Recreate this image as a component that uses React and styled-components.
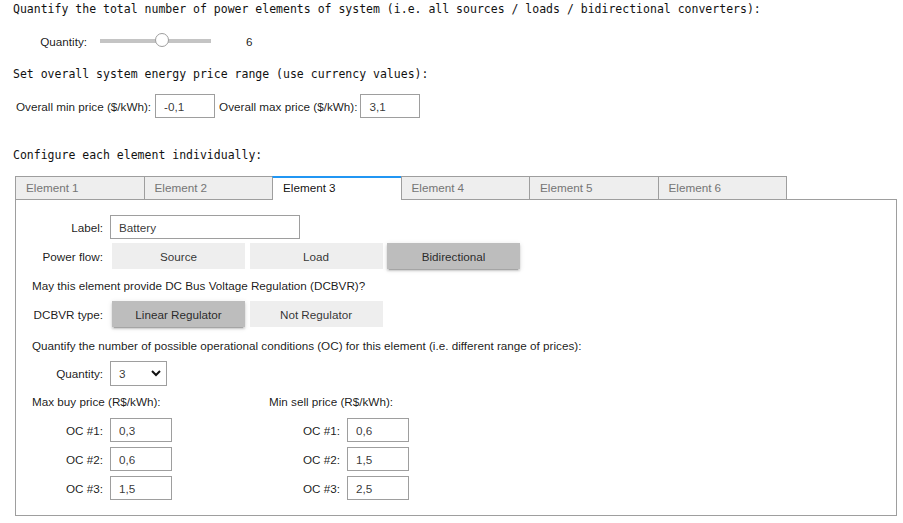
import React from 'react';
import styled, { createGlobalStyle } from 'styled-components';

const GlobalStyle = createGlobalStyle`
    body {
        margin: 0;
        background: #fff;
    }
`;

const Page = styled.div`
    padding: 0 0 0 13px;
    font-family: "Liberation Sans", Arial, sans-serif;
    font-size: 11.7px;
    color: rgba(0, 0, 0, 0.9);
`;

const MonoLine = styled.div`
    font-family: "DejaVu Sans Mono", monospace;
    font-size: 11.5px;
    line-height: 18px;
    height: 18px;
    color: #111;
    white-space: pre;
    margin-top: ${p => p.$top || 0}px;
`;

const Row = styled.div`
    display: flex;
    align-items: center;
    height: 26px;
    margin-top: ${p => p.$top || 0}px;
    margin-left: ${p => p.$left || 0}px;
`;

const Desc = styled.div`
    flex: 0 0 auto;
    width: ${p => (p.$w ? `${p.$w}px` : 'auto')};
    text-align: right;
    padding-right: ${p => p.$pr || 0}px;
    box-sizing: border-box;
    white-space: nowrap;
`;

const Track = styled.div`
    position: relative;
    width: 111px;
    height: 4px;
    margin-left: 13px;
    background: #c4c4c4;
`;

const Knob = styled.div`
    position: absolute;
    left: 55px;
    top: -6px;
    width: 14px;
    height: 14px;
    border-radius: 50%;
    border: 1px solid #9e9e9e;
    background: #fff;
    box-sizing: border-box;
`;

const Readout = styled.div`
    margin-left: 35px;
`;

const TextBox = styled.div`
    flex: 0 0 auto;
    width: ${p => p.$w}px;
    height: 24px;
    border: 1px solid #9e9e9e;
    box-sizing: border-box;
    padding: 0 8px;
    display: flex;
    align-items: center;
    color: rgba(0, 0, 0, 0.8);
    margin-right: ${p => p.$mr || 0}px;
`;

const Select = styled(TextBox)`
    justify-content: space-between;
    height: 25px;
    padding-right: 4px;
`;

const TabBar = styled.div`
    display: flex;
    align-items: flex-start;
    width: 772px;
    height: 23px;
    margin: 12px 0 0 2px;
`;

const Tab = styled.div`
    position: relative;
    z-index: 1;
    flex: 1 1 0;
    height: ${p => (p.$active ? 24 : 23)}px;
    box-sizing: border-box;
    border: 1px solid #9e9e9e;
    border-top: ${p => (p.$active ? '2px solid #2196f3' : '1px solid #9e9e9e')};
    border-bottom: none;
    margin-left: -1px;
    &:first-child { margin-left: 0; }
    background: ${p => (p.$active ? '#fff' : '#eeeeee')};
    color: ${p => (p.$active ? 'rgba(0,0,0,0.95)' : '#757575')};
    padding: ${p => (p.$active ? '2px' : '3px')} 0 0 10px;
    line-height: 15px;
`;

const Panel = styled.div`
    width: 882px;
    margin-left: 2px;
    box-sizing: border-box;
    border: 1px solid #9e9e9e;
    padding: 14px 16px 14px 16px;
    display: flex;
    flex-direction: column;
    gap: 3px;
`;

const ToggleGroup = styled.div`
    display: flex;
    gap: 4.5px;
    margin-left: 2px;
`;

const Toggle = styled.div`
    width: 133px;
    height: 26px;
    display: flex;
    align-items: center;
    justify-content: center;
    background: ${p => (p.$active ? '#bdbdbd' : '#eeeeee')};
    color: rgba(0, 0, 0, 0.8);
    box-shadow: ${p =>
        p.$active
            ? '0 2px 2px 0 rgba(0,0,0,.14), 0 3px 1px -2px rgba(0,0,0,.2), 0 1px 5px 0 rgba(0,0,0,.12)'
            : 'none'};
`;

const Columns = styled.div`
    display: flex;
    margin-top: -1px;
`;

const Column = styled.div`
    width: ${p => p.$w}px;
    display: flex;
    flex-direction: column;
    gap: 3px;
`;

const Chevron = () => (
    <svg width="12" height="12" viewBox="0 0 12 12">
        <path d="M2 4 L6 8 L10 4" fill="none" stroke="#111" strokeWidth="2" />
    </svg>
);

const ToggleButtons = ({ options, active }) => (
    <ToggleGroup>
        {options.map(o => (
            <Toggle key={o} $active={o === active}>{o}</Toggle>
        ))}
    </ToggleGroup>
);

const OcColumn = ({ title, values, w }) => (
    <Column $w={w}>
        <Row>{title}</Row>
        {values.map((v, i) => (
            <Row key={i}>
                <Desc $w={78} $pr={7}>OC #{i + 1}:</Desc>
                <TextBox $w={62}>{v}</TextBox>
            </Row>
        ))}
    </Column>
);

const tabs = ['Element 1', 'Element 2', 'Element 3', 'Element 4', 'Element 5', 'Element 6'];

const App = () => {
    return (
        <>
            <GlobalStyle />
            <Page>
                <MonoLine>Quantify the total number of power elements of system (i.e. all sources / loads / bidirectional converters):</MonoLine>
                <Row $top={10} $left={2}>
                    <Desc $w={72}>Quantity:</Desc>
                    <Track><Knob /></Track>
                    <Readout>6</Readout>
                </Row>
                <MonoLine $top={11}>Set overall system energy price range (use currency values):</MonoLine>
                <Row $top={10} $left={3}>
                    <Desc $pr={4}>Overall min price ($/kWh):</Desc>
                    <TextBox $w={60} $mr={4}>-0,1</TextBox>
                    <Desc $pr={3}>Overall max price ($/kWh):</Desc>
                    <TextBox $w={60}>3,1</TextBox>
                </Row>
                <MonoLine $top={27}>Configure each element individually:</MonoLine>
                <TabBar>
                    {tabs.map(t => (
                        <Tab key={t} $active={t === 'Element 3'}>{t}</Tab>
                    ))}
                </TabBar>
                <Panel>
                    <Row>
                        <Desc $w={78} $pr={7}>Label:</Desc>
                        <TextBox $w={190}>Battery</TextBox>
                    </Row>
                    <Row>
                        <Desc $w={78} $pr={7}>Power flow:</Desc>
                        <ToggleButtons options={['Source', 'Load', 'Bidirectional']} active="Bidirectional" />
                    </Row>
                    <Row>May this element provide DC Bus Voltage Regulation (DCBVR)?</Row>
                    <Row>
                        <Desc $w={78} $pr={7}>DCBVR type:</Desc>
                        <ToggleButtons options={['Linear Regulator', 'Not Regulator']} active="Linear Regulator" />
                    </Row>
                    <Row $top={2}>Quantify the number of possible operational conditions (OC) for this element (i.e. different range of prices):</Row>
                    <Row $top={-1}>
                        <Desc $w={78} $pr={7}>Quantity:</Desc>
                        <Select $w={57}>3<Chevron /></Select>
                    </Row>
                    <Columns>
                        <OcColumn w={237} title="Max buy price (R$/kWh):" values={['0,3', '0,6', '1,5']} />
                        <OcColumn w={300} title="Min sell price (R$/kWh):" values={['0,6', '1,5', '2,5']} />
                    </Columns>
                </Panel>
            </Page>
        </>
    );
};

export default App;
